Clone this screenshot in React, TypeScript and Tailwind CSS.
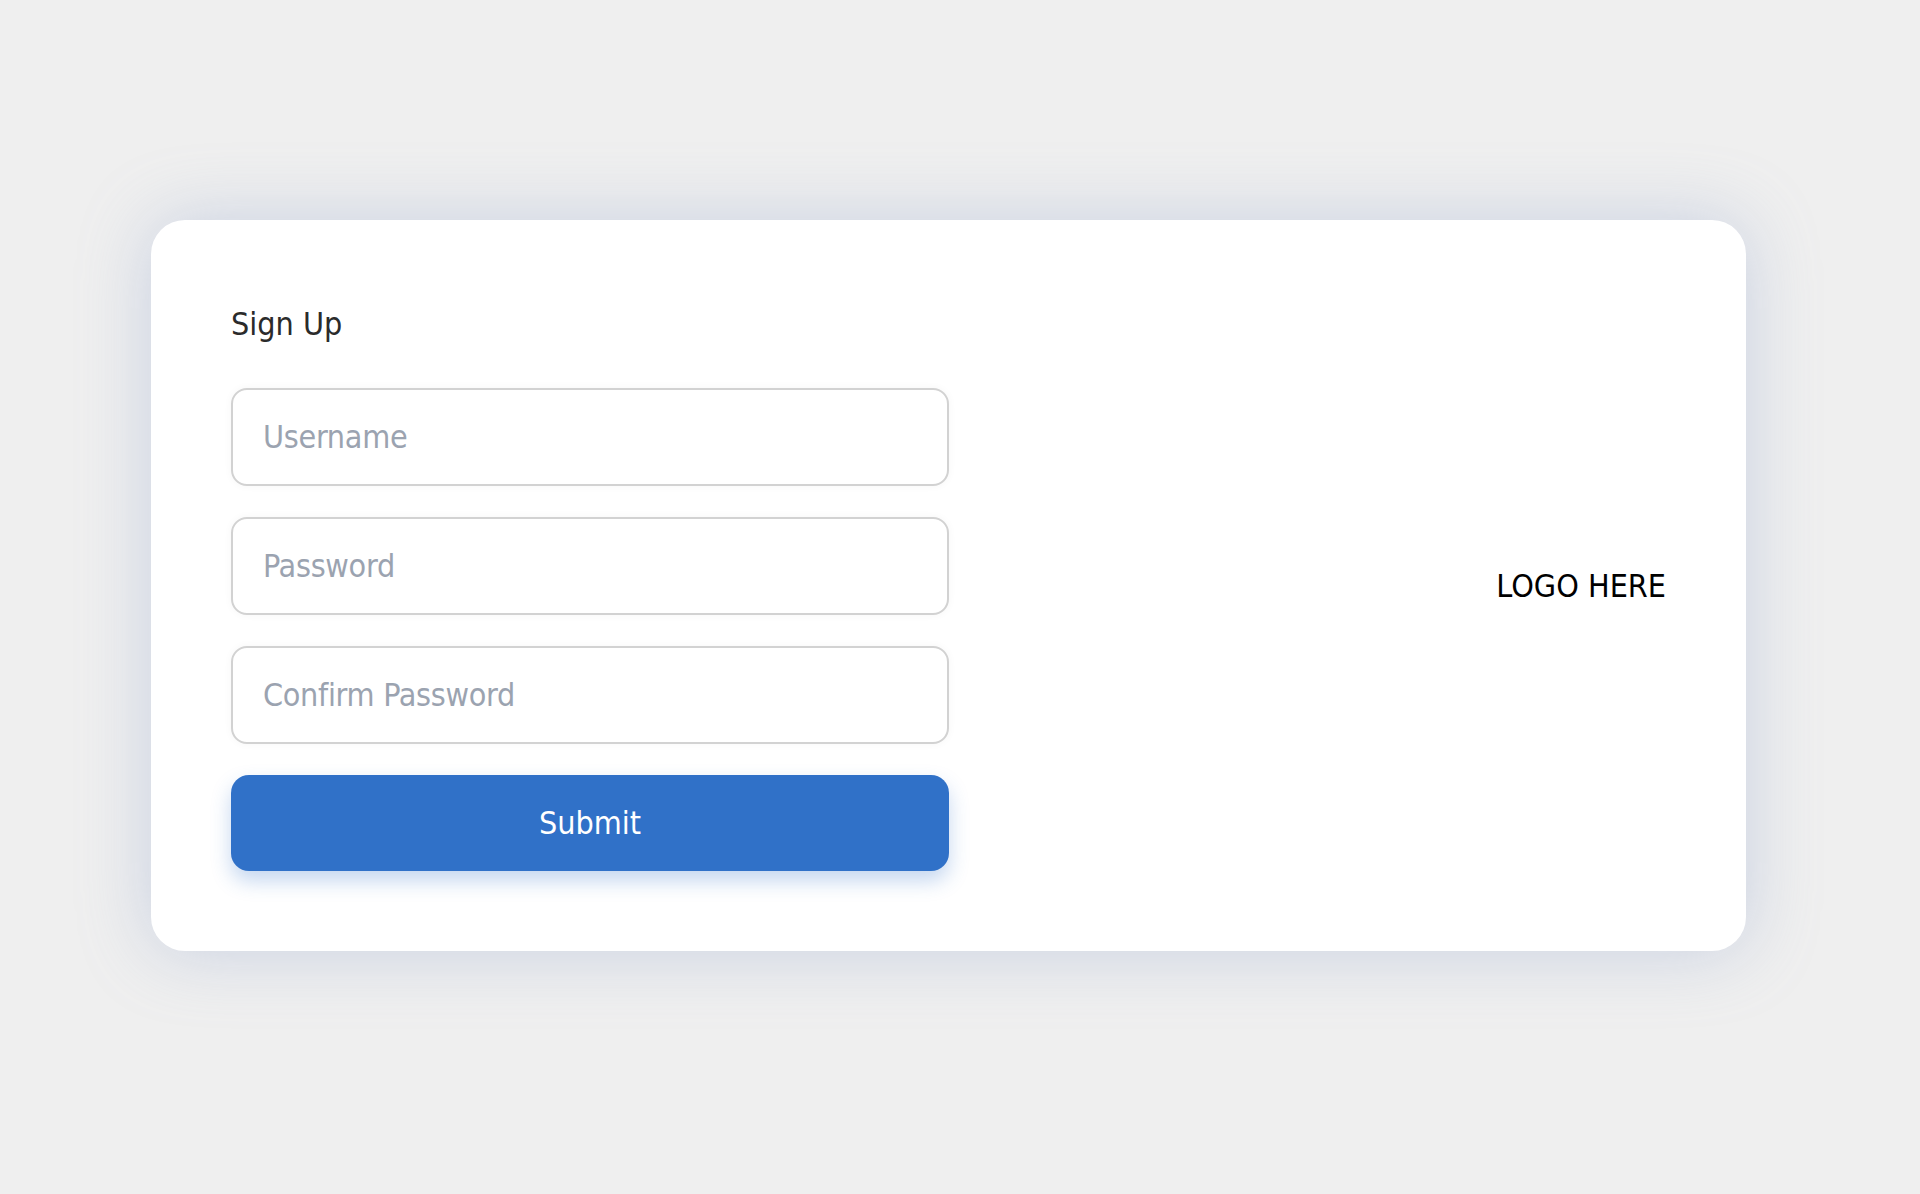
import React from "react";

export default function App() {
  const font = { fontFamily: '"DejaVu Sans Condensed", "DejaVu Sans", sans-serif' };
  return (
    <div className="min-h-screen w-full bg-[#efefef] pt-[220px] pl-[151px]" style={font}>
      <div className="flex w-[1595px] items-center justify-between rounded-[34px] bg-white p-[80px] shadow-[0_0_70px_rgba(140,160,205,0.38)]">
        <div className="flex w-[718px] flex-col">
          <h1 className="h-[48px] text-[32px] leading-[48px] font-normal text-[#2b2b2b]">Sign Up</h1>
          <div className="mt-[40px] flex flex-col gap-[31px]">
            {["Username", "Password", "Confirm Password"].map((p) => (
              <input
                key={p}
                type={p === "Username" ? "text" : "password"}
                placeholder={p}
                className="h-[98px] w-full rounded-[16px] border-2 border-[#d2d2d2] bg-white px-[30px] text-[32px] tracking-[-0.3px] text-[#333] shadow-[0_0_8px_rgba(0,0,0,0.04)] outline-none placeholder:text-[#9ba3b0]"
                style={font}
              />
            ))}
            <button
              className="h-[96px] w-full rounded-[18px] bg-[#3071c8] text-[32px] text-white shadow-[0_10px_20px_rgba(48,113,200,0.28)]"
              style={font}
            >
              Submit
            </button>
          </div>
        </div>
        <div className="text-[32px] leading-[48px] text-black">LOGO HERE</div>
      </div>
    </div>
  );
}
